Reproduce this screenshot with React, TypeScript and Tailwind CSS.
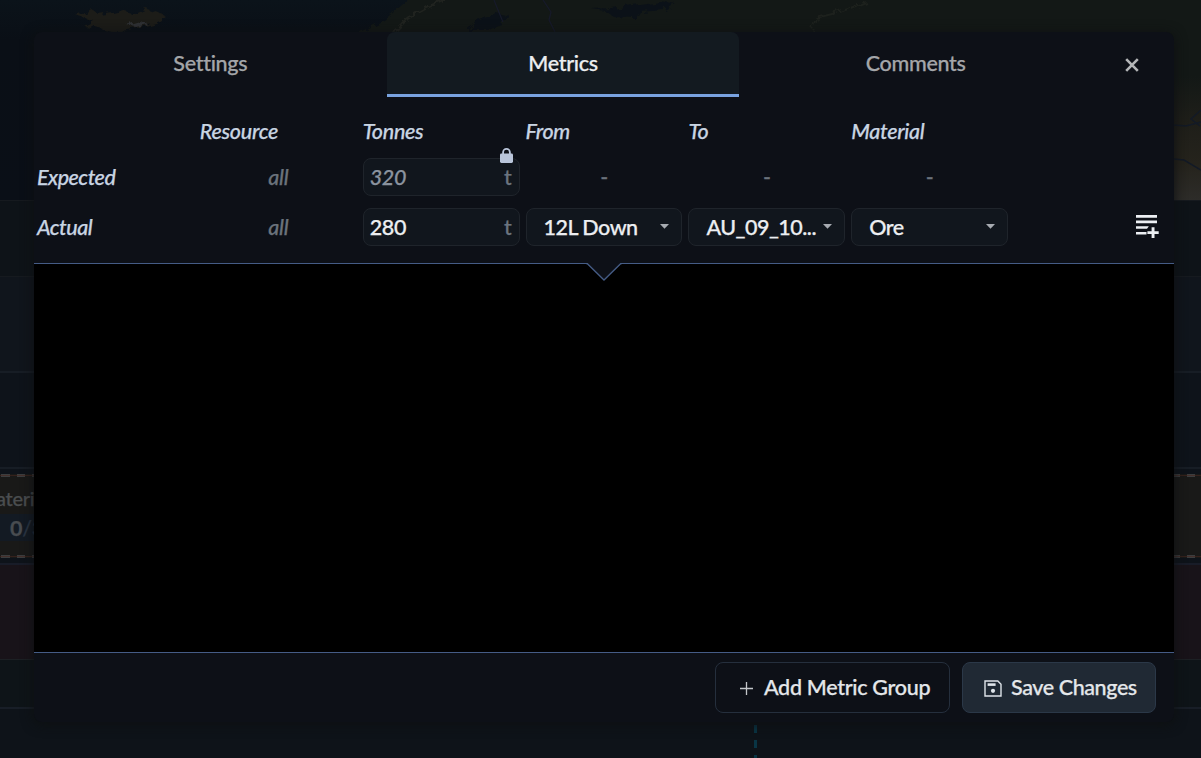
import React from 'react';

const tabs = ['Settings', 'Metrics', 'Comments'];
const headers = ['', 'Resource', 'Tonnes', 'From', 'To', 'Material', ''];

// Satellite map strip behind the dialog
const MapStrip = () => (
  <svg className="block h-[200px] w-full shrink-0" viewBox="0 0 1201 200" preserveAspectRatio="none">
    <defs>
      <linearGradient id="sea" x1="0" y1="0" x2="0" y2="1">
        <stop offset="0" stopColor="#0b131a" />
        <stop offset="0.2" stopColor="#0a0f16" />
        <stop offset="1" stopColor="#0a0f17" />
      </linearGradient>
      <linearGradient id="desert" x1="0" y1="0" x2="0" y2="1">
        <stop offset="0" stopColor="#131816" />
        <stop offset="0.35" stopColor="#1e1e19" />
        <stop offset="0.7" stopColor="#25231c" />
        <stop offset="1" stopColor="#2d2c29" />
      </linearGradient>
      <filter id="rough" x="-10%" y="-20%" width="120%" height="140%" colorInterpolationFilters="sRGB">
        <feTurbulence type="fractalNoise" baseFrequency="0.12" numOctaves="4" seed="4" result="n" />
        <feDisplacementMap in="SourceGraphic" in2="n" scale="9" result="d" />
        <feGaussianBlur in="d" stdDeviation="0.7" />
      </filter>
    </defs>
    <rect width="1201" height="200" fill="url(#sea)" />
    <g filter="url(#rough)">
      <path d="M75 15 L84 12 L90 8 L98 14 L112 12 L120 10 L132 14 L146 8 L158 12 L166 17 L156 23 L142 27 L128 30 L112 32 L96 28 L84 26 L94 21 Z" fill="#1c1c18" />
      <path d="M126 25 L140 21 L148 24 L136 27 Z" fill="#2f3135" />
      <path d="M352 36 L384 20 L402 5 L418 -10 H1220 V130 H1150 V40 Z" fill="#131816" />
      <path d="M466 30 L480 20 L496 13 L510 16 L502 25 L488 30 Z" fill="#0b1118" />
      <path d="M592 9 L612 8 L640 4 L660 1 L676 4 L664 10 L640 12 L636 18 L614 17 L606 11 Z" fill="#0b1118" />
      <path d="M392 34 L408 18 L430 6 L445 0" fill="none" stroke="#20231f" strokeWidth="3" />
      <path d="M812 30 L816 18 L840 12 L866 2" fill="none" stroke="#1d211d" strokeWidth="2" />
    </g>
    <path d="M494 0 L498 10 L503 22 M543 0 L551 12 L549 20 L555 32" fill="none" stroke="#171a2a" strokeWidth="1.2" />
    <rect x="1174" y="76" width="27" height="124" fill="url(#desert)" />
    <path d="M1174 125 L1186 126 L1201 122 M1201 110 L1191 119 L1200 126 M1174 159 L1184 160 L1201 170" fill="none" stroke="#131a26" strokeWidth="1.5" />
  </svg>
);

const DashedEdge = () => (
  <div className="flex h-[3px] items-center bg-[repeating-linear-gradient(90deg,#3c3d3e_0_8px,transparent_8px_15px)] bg-[position:2px_0]">
    <div className="h-px w-full bg-[#482720]/60" />
  </div>
);

// Dimmed schedule rows that show around the dialog
const Schedule = () => (
  <div className="flex h-[758px] flex-col overflow-hidden">
    <MapStrip />
    <div className="h-[77px] shrink-0 border-y border-[#161a1f] bg-[#0e1318]" />
    <div className="h-[96px] shrink-0 border-b-2 border-[#171d25] bg-[#10151c]" />
    <div className="h-[96px] shrink-0 border-b-2 border-[#171d25] bg-[#0e131a]" />
    <div className="h-[5px] shrink-0 bg-[#0e131a]" />
    <div className="flex h-[84px] shrink-0 flex-col bg-[#191918]">
      <DashedEdge />
      <div className="w-[34px] flex-1 pt-[7px] text-[20px] leading-7">
        <div className="-ml-[4px] h-7 text-[#4a4d4f]">ateri</div>
        <div className="mt-[2px] flex h-[27px] items-center bg-[#131a23] pl-[10px] text-[#2a3543]">
          <span className="text-[21.5px] font-bold text-[#484c50]">0</span>
          <span className="text-[21.5px]">/3</span>
        </div>
      </div>
      <DashedEdge />
    </div>
    <div className="h-[7px] shrink-0 border-b-2 border-[#181c28] bg-[#0e131a]" />
    <div className="h-[95px] shrink-0 border-b border-[#1c2024] bg-[#181319]" />
    <div className="h-[49px] shrink-0 border-b-2 border-[#181e27] bg-[#0e1418]" />
    <div className="flex flex-1 bg-[#0e1319] pt-4 pl-[754px]">
      <div className="w-[3px] bg-[repeating-linear-gradient(180deg,#093545_0_8px,transparent_8px_15px)]" />
    </div>
  </div>
);

const LockIcon = () => (
  <svg className="absolute -top-[11px] right-[6px]" width="13" height="15" viewBox="0 0 13 15">
    <path d="M3.1 7V4.3a3.4 3.4 0 0 1 6.8 0V7" fill="none" stroke="#b9c5da" strokeWidth="1.8" />
    <rect y="5.6" width="13" height="9.4" rx="1.4" fill="#b9c5da" />
  </svg>
);

const AddRowIcon = () => (
  <svg className="mb-[2px]" width="24" height="24" viewBox="0 0 24 24" fill="#eceff3">
    <path d="M1 1h21v2.7H1zM1 6.6h21v2.7H1zM1 12.3h12.8l-1.8 2.5H1zM1 18h10.5v2.5H1z" />
    <path d="M16.6 13.2h2.9v4h4.2v2.8h-4.2v4h-2.9v-4h-4.2v-2.8h4.2z" />
  </svg>
);

const SaveIcon = () => (
  <svg width="18" height="17" viewBox="0 0 18 17">
    <path d="M1 1h12.8L17 4.2V16H1z" fill="none" stroke="#dfe4ea" strokeWidth="1.4" />
    <path d="M3.6 3.3h8v2.6h-8z" fill="#dfe4ea" />
    <circle cx="9" cy="10.8" r="2.1" fill="#dfe4ea" />
  </svg>
);

const TonnesInput = ({ value, locked = false }: { value: string; locked?: boolean }) => (
  <div className="relative flex h-[38px] items-center justify-between rounded-lg border border-[#1f242b] bg-[#11161d] pr-[7px] pl-[6px]">
    <span className={locked ? 'text-[#8b939f] italic' : 'text-[#eceef1]'}>{value}</span>
    <span className="text-[#6c747f]">t</span>
    {locked && <LockIcon />}
  </div>
);

const SelectBox = ({ value }: { value: string }) => (
  <div className="flex h-[38px] items-center justify-between rounded-lg border border-[#1f242b] bg-[#11161d] pr-3 pl-[17px] text-[#eceef1]">
    <span className="whitespace-nowrap tracking-[-0.5px]">{value}</span>
    <svg width="9" height="5" viewBox="0 0 9 5" className="mb-[2px] shrink-0">
      <path d="M0 0h9L4.5 4.8z" fill="#a7abb1" />
    </svg>
  </div>
);

const MetricsTable = () => (
  <div className="h-[166px] pt-[14px]">
    <div className="grid h-[41px] grid-cols-7 items-center pb-px text-[#c9d5e3] italic">
      {headers.map((header, i) => (
        <div key={i} className="px-[3px]">
          {header}
        </div>
      ))}
    </div>
    <div className="grid h-[50px] grid-cols-7 items-center *:px-[3px]">
      <div className="tracking-[-0.5px] text-[#c9d5e3] italic">Expected</div>
      <div className="text-center text-[#6b737c] italic">all</div>
      <div>
        <TonnesInput value="320" locked />
      </div>
      {[0, 1, 2].map((i) => (
        <div key={i} className="text-center text-[#6b737c]">
          -
        </div>
      ))}
    </div>
    <div className="grid h-[50px] grid-cols-7 items-center *:px-[3px]">
      <div className="tracking-[-0.5px] text-[#c9d5e3] italic">Actual</div>
      <div className="text-center text-[#6b737c] italic">all</div>
      <div>
        <TonnesInput value="280" />
      </div>
      <div>
        <SelectBox value="12L Down" />
      </div>
      <div>
        <SelectBox value="AU_09_10..." />
      </div>
      <div>
        <SelectBox value="Ore" />
      </div>
      <div className="flex justify-end">
        <div className="pr-3">
          <AddRowIcon />
        </div>
      </div>
    </div>
  </div>
);

const MetricsDialog = () => (
  <div className="absolute top-8 left-[34px] flex h-[690px] w-[1140px] flex-col rounded-lg bg-[#0d1017] shadow-[0_2px_12px_1px_rgba(13,15,17,0.9)]">
    <div className="flex h-[65px] shrink-0">
      {tabs.map((tab) => (
        <div
          key={tab}
          className={
            tab === 'Metrics'
              ? 'flex flex-1 items-center justify-center rounded-t-lg border-b-3 border-[#79a3e0] bg-[#131a20] text-[#eceef0]'
              : 'flex flex-1 items-center justify-center border-b-3 border-transparent text-[#a4a6a9]'
          }
        >
          {tab}
        </div>
      ))}
      <div className="flex w-[82px] items-center justify-center pr-[3px]">
        <svg width="14" height="14" viewBox="0 0 14 14">
          <path d="M1.2 1.2l11.6 11.6M12.8 1.2L1.2 12.8" stroke="#b4b6b8" strokeWidth="2.6" />
        </svg>
      </div>
    </div>
    <MetricsTable />
    <div className="relative h-[390px] shrink-0 border-y border-[#455c86] bg-black">
      <svg className="absolute -top-px left-[552px]" width="36" height="19" viewBox="0 0 36 19">
        <path d="M0 0H36V0.5L18 17L0 0.5Z" fill="#0d1017" />
        <path d="M0 0.5H1.2L18 17L34.8 0.5H36" fill="none" stroke="#455c86" strokeWidth="1.3" />
      </svg>
    </div>
    <div className="flex flex-1 items-start justify-end gap-3 pt-[9px] pr-[18px] text-[#e4e7ea]">
      <button className="flex h-[51px] w-[235px] items-center gap-[11px] rounded-lg border border-[#252f3d] pl-6">
        <svg className="mt-[2px]" width="13" height="13" viewBox="0 0 13 13">
          <path d="M6.5 0v13M0 6.5h13" stroke="#c3c6ca" strokeWidth="1.3" />
        </svg>
        Add Metric Group
      </button>
      <button className="flex h-[51px] w-[194px] items-center gap-[9px] rounded-lg border border-[#2b3848] bg-[#202934] pl-[21px]">
        <span className="mt-[2px]">
          <SaveIcon />
        </span>
        <span className="tracking-[-0.4px]">Save Changes</span>
      </button>
    </div>
  </div>
);

const App = () => {
  return (
    <div className="relative h-[758px] w-[1201px] overflow-hidden bg-[#0e1319] font-['Lato',sans-serif] text-[21.5px] font-medium tracking-[-0.3px] [-webkit-text-stroke:0.25px_currentColor]">
      <Schedule />
      <MetricsDialog />
    </div>
  );
};

export default App;
